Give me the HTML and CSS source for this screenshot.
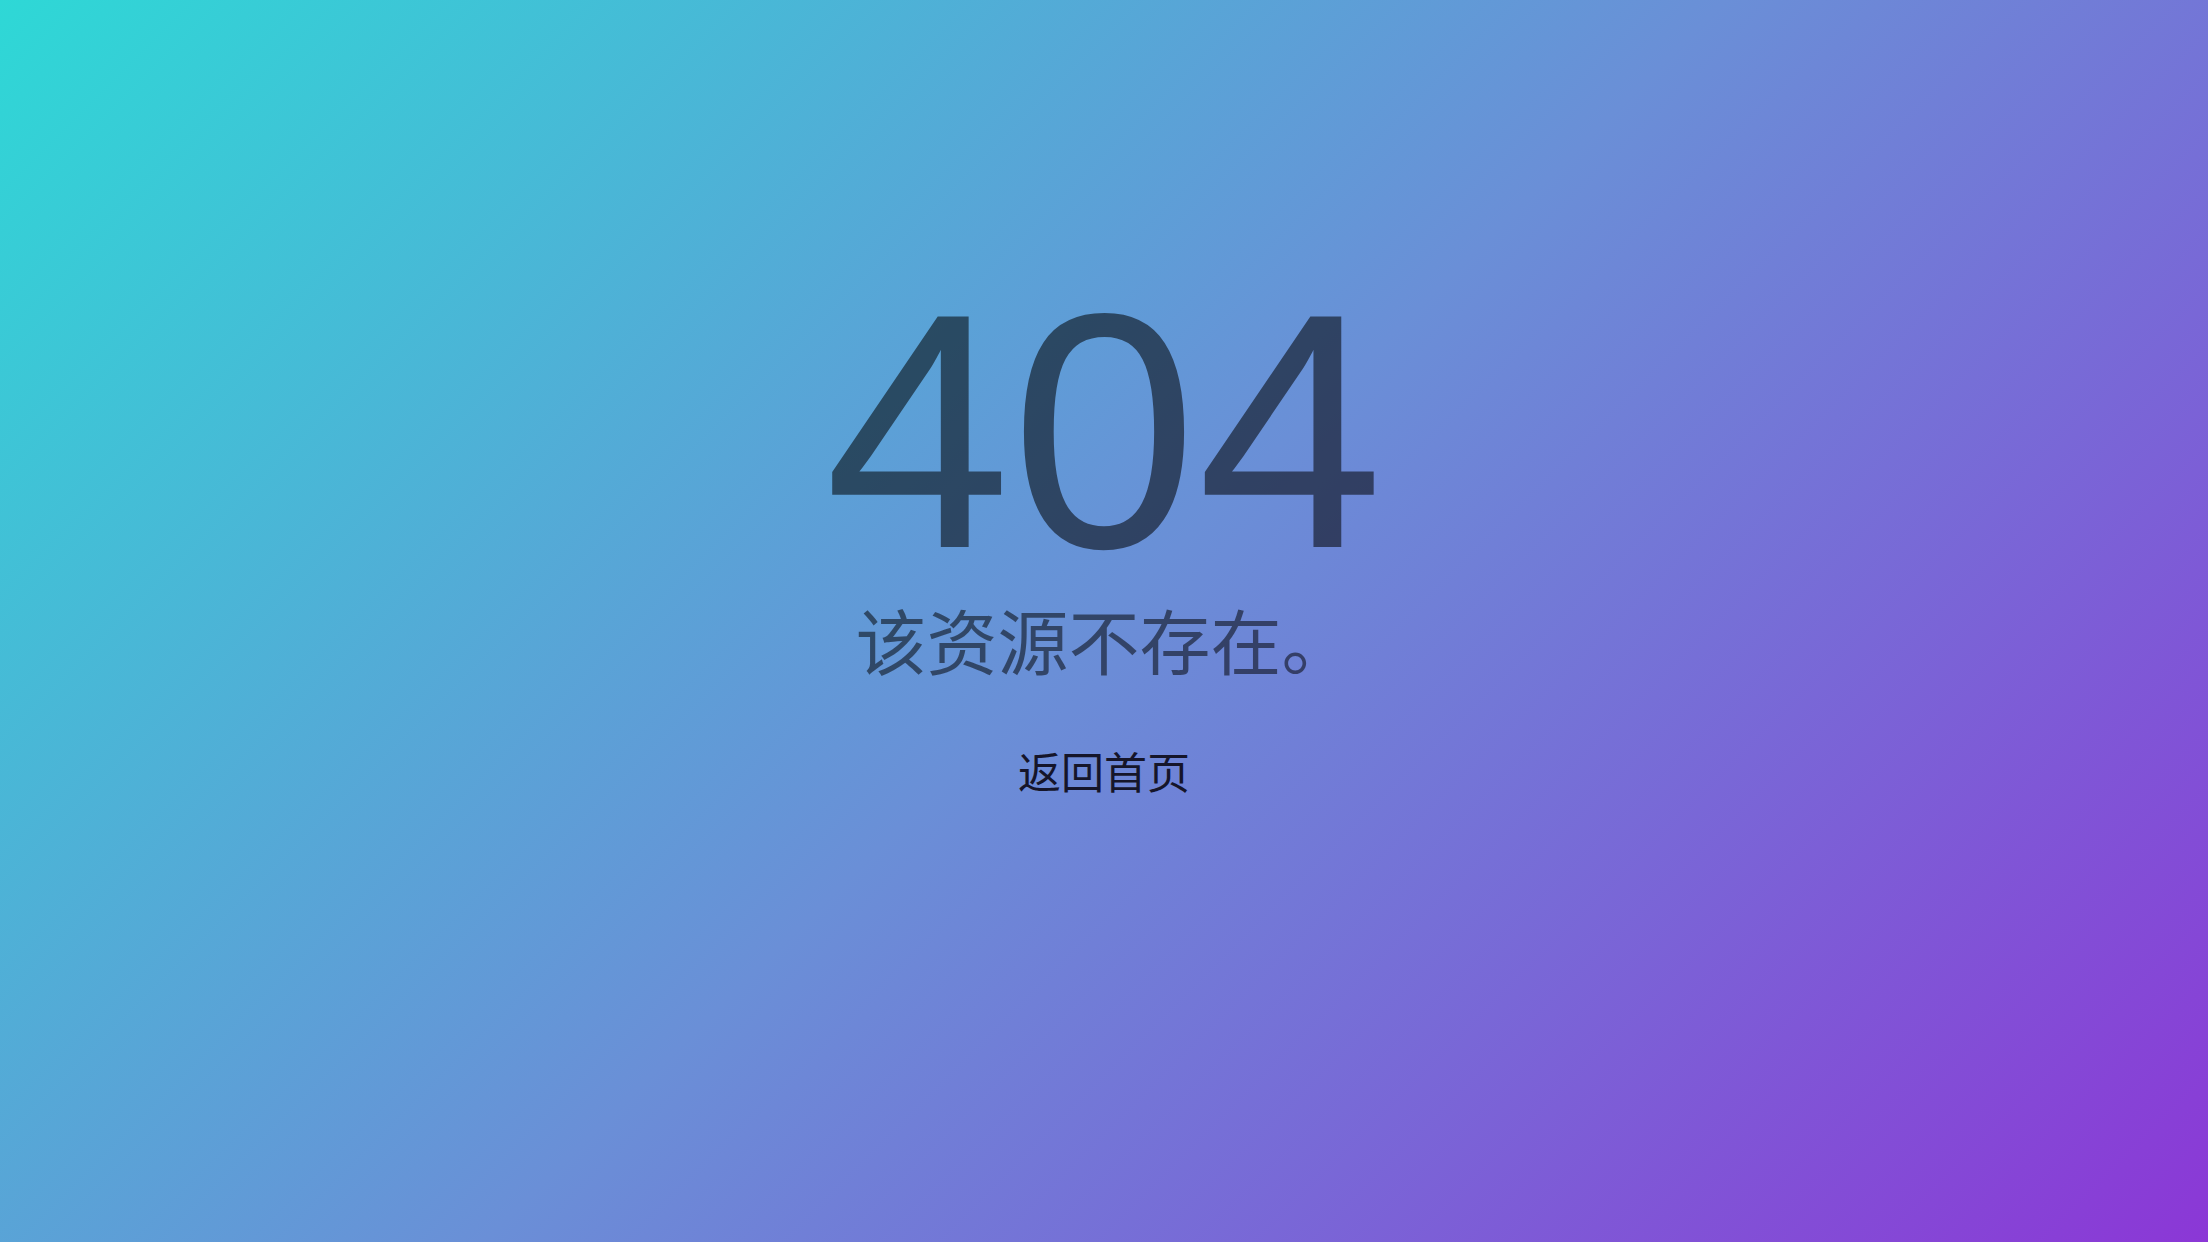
FILE: index.html
```html
<!DOCTYPE html>
<html lang="zh-CN">
<head>
<meta charset="utf-8">
<title>404</title>
<link rel="stylesheet" href="styles.css">
</head>
<body>
<main class="page">
  <h1 class="code">404</h1>
  <p class="message">该资源不存在。</p>
  <a class="home" href="#">返回首页</a>
</main>
</body>
</html>
```
FILE: styles.css
```css
html, body {
  margin: 0;
  padding: 0;
}
.page {
  box-sizing: border-box;
  min-height: 100vh;
  padding-top: 275px;
  display: flex;
  flex-direction: column;
  align-items: center;
  background: linear-gradient(135deg, #2ed8d6 0%, #6a8fd7 50%, #8b37d6 100%);
  font-family: "Noto Sans CJK SC", "Liberation Sans", sans-serif;
}
.code {
  margin: 0;
  font-family: "Liberation Sans", Arial, sans-serif;
  font-weight: normal;
  font-size: 335px;
  line-height: 313px;
  color: rgba(0, 0, 0, 0.54);
}
.message {
  margin: 0;
  font-size: 71px;
  line-height: 100px;
  color: rgba(0, 0, 0, 0.52);
}
.home {
  margin-top: 52px;
  font-size: 43px;
  line-height: 60px;
  color: #15152a;
  text-decoration: none;
}
```
